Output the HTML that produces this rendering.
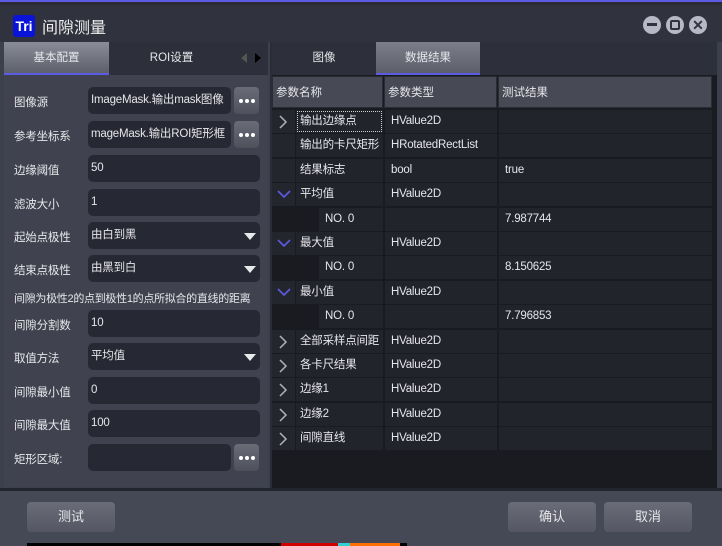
<!DOCTYPE html>
<html><head><meta charset="utf-8"><style>
*{margin:0;padding:0;box-sizing:border-box}
body{width:722px;height:546px;background:#3c3f4c;font-family:"Liberation Sans","Noto Sans CJK SC",sans-serif;font-size:11.5px;color:#e6e6ea;position:relative;overflow:hidden}
.abs{position:absolute}
.top{left:0;top:0;width:722px;height:5px;background:#2a2b34;border-top:2px solid #5b5be6}
.title{left:0;top:5px;width:722px;height:37px;background:#30323d}
.logo{left:13px;top:15px;width:22px;height:22px;background:#0a14d8;border-radius:3px;color:#fff;font-weight:bold;font-size:14px;line-height:22px;text-align:center}
.ttext{left:42px;top:14px;font-size:16px;color:#eee}
.wb{top:16px;width:18px;height:18px;border-radius:50%;background:#b6b8c6}
.lefttabs{left:4px;top:42px;width:230px;height:33px;background:#2d2f3a}
.tabA{left:4px;top:42px;width:105px;height:33px;background:linear-gradient(#8a8c98,#5d5f6b);border-bottom:2px solid #5b5be6;text-align:center;line-height:32px}
.tabB{left:109px;top:42px;width:125px;height:33px;text-align:center;line-height:33px;background:#2d2f3a}
.arrows{left:234px;top:42px;width:34px;height:33px;background:#2d2f3a}
.lp{left:4px;top:75px;width:264px;height:412px;background:#40434f}
.lab{left:14px;font-size:11.5px;white-space:nowrap;letter-spacing:-0.2px}
.inp{left:88px;width:172px;height:27px;background:#262833;border-radius:5px;padding-left:3px;line-height:27px;font-size:11.5px;white-space:nowrap;overflow:hidden;letter-spacing:-0.2px}
.inp.s{width:143px}
.dots{left:234px;width:25px;height:27px;border-radius:4px;background:linear-gradient(#6a6c78,#4e505c)}
.dots i{position:absolute;top:12px;width:4px;height:4px;border-radius:50%;background:#fff}
.tri{position:absolute;right:4px;top:11px;width:0;height:0;border-left:6px solid transparent;border-right:6px solid transparent;border-top:7px solid #e8e8ec}
.rp{left:270px;top:42px;width:447px;height:446px;background:#1a1b21;border-left:2px solid #2a2c36}
.rtabs{left:272px;top:42px;width:445px;height:33px;background:#2d2f3a}
.rt1{left:272px;top:42px;width:104px;height:33px;text-align:center;line-height:33px}
.rt2{left:376px;top:42px;width:104px;height:33px;background:linear-gradient(#7c7e8a,#5c5e6a);border-bottom:2px solid #5b5be6;text-align:center;line-height:32px}
.hd{top:76px;height:32px;background:#474955;line-height:32px;padding-left:3px;border:1px solid #2a2b33}
.cell{height:23px;background:#22242c;line-height:23px;padding-left:6px;white-space:nowrap;overflow:hidden;letter-spacing:-0.2px}
.bot{left:0;top:488px;width:722px;height:58px;background:#454855;border-top:3px solid #23252d}
.btn{top:502px;width:88px;height:30px;border-radius:4px;background:linear-gradient(#6a6c78,#545663);text-align:center;line-height:30px;font-size:13px}
</style></head><body>
<div class="abs top"></div>
<div class="abs title"></div>
<div class="abs logo">Tri</div>
<div class="abs ttext">间隙测量</div>
<div class="abs wb" style="left:643px"><div style="position:absolute;left:4px;top:7px;width:10px;height:3px;background:#30323d"></div></div>
<div class="abs wb" style="left:666px"><div style="position:absolute;left:4px;top:4px;width:10px;height:10px;border:2px solid #30323d;border-radius:2px"></div></div>
<div class="abs wb" style="left:689px;color:#30323d;font-weight:bold;font-size:14px;text-align:center;line-height:18px">✕</div>

<div class="abs lefttabs"></div>
<div class="abs tabA">基本配置</div>
<div class="abs tabB">ROI设置</div>
<div class="abs arrows"><div style="position:absolute;left:7px;top:11px;border-right:6px solid #555;border-top:5px solid transparent;border-bottom:5px solid transparent"></div><div style="position:absolute;left:21px;top:11px;border-left:6px solid #000;border-top:5px solid transparent;border-bottom:5px solid transparent"></div></div>
<div class="abs lp"></div>

<div class="abs lab" style="top:94px">图像源</div><div class="abs inp s" style="top:87px">ImageMask.输出mask图像</div><div class="abs dots" style="top:87px"><i style="left:5px"></i><i style="left:11px"></i><i style="left:17px"></i></div>
<div class="abs lab" style="top:128px">参考坐标系</div><div class="abs inp s" style="top:121px">mageMask.输出ROI矩形框</div><div class="abs dots" style="top:121px"><i style="left:5px"></i><i style="left:11px"></i><i style="left:17px"></i></div>
<div class="abs lab" style="top:162px">边缘阈值</div><div class="abs inp" style="top:155px">50</div>
<div class="abs lab" style="top:196px">滤波大小</div><div class="abs inp" style="top:189px">1</div>
<div class="abs lab" style="top:229px">起始点极性</div><div class="abs inp" style="top:222px">由白到黑<div class="tri"></div></div>
<div class="abs lab" style="top:262px">结束点极性</div><div class="abs inp" style="top:255px">由黑到白<div class="tri"></div></div>
<div class="abs lab" style="top:290px;font-size:11px;letter-spacing:-0.3px">间隙为极性2的点到极性1的点所拟合的直线的距离</div>
<div class="abs lab" style="top:317px">间隙分割数</div><div class="abs inp" style="top:310px">10</div>
<div class="abs lab" style="top:350px">取值方法</div><div class="abs inp" style="top:343px">平均值<div class="tri"></div></div>
<div class="abs lab" style="top:384px">间隙最小值</div><div class="abs inp" style="top:377px">0</div>
<div class="abs lab" style="top:417px">间隙最大值</div><div class="abs inp" style="top:410px">100</div>
<div class="abs lab" style="top:451px">矩形区域:</div><div class="abs inp s" style="top:444px"></div><div class="abs dots" style="top:444px"><i style="left:5px"></i><i style="left:11px"></i><i style="left:17px"></i></div>

<div class="abs rp"></div>
<div class="abs rtabs"></div>
<div class="abs rt1">图像</div>
<div class="abs rt2">数据结果</div>
<div class="abs hd" style="left:272px;width:111px">参数名称</div>
<div class="abs hd" style="left:384px;width:113px">参数类型</div>
<div class="abs hd" style="left:498px;width:214px">测试结果</div>

<div id="rows"></div>
<script>
var rows=[["r","输出边缘点","HValue2D",""],["","输出的卡尺矩形","HRotatedRectList",""],["","结果标志","bool","true"],["d","平均值","HValue2D",""],["c","NO. 0","","7.987744"],["d","最大值","HValue2D",""],["c","NO. 0","","8.150625"],["d","最小值","HValue2D",""],["c","NO. 0","","7.796853"],["r","全部采样点间距","HValue2D",""],["r","各卡尺结果","HValue2D",""],["r","边缘1","HValue2D",""],["r","边缘2","HValue2D",""],["r","间隙直线","HValue2D",""]];
var h="";
rows.forEach(function(r,i){var y=110+i*24.4;
 var a=r[0]=="r"?'<svg class="abs" style="left:278px;top:'+(y+5)+'px" width="10" height="14"><path d="M2 1 L8 7 L2 13" stroke="#b0b2bc" stroke-width="1.5" fill="none"/></svg>':r[0]=="d"?'<svg class="abs" style="left:277px;top:'+(y+7)+'px" width="14" height="9"><path d="M1 1 L7 7 L13 1" stroke="#5b5be6" stroke-width="1.6" fill="none"/></svg>':'';
 if(r[0]=="c"){h+='<div class="abs cell" style="left:272px;top:'+y+'px;width:23px;background:#1a1b21"></div><div class="abs cell" style="left:296px;top:'+y+'px;width:22px;background:#1a1b21"></div><div class="abs cell" style="left:319px;top:'+y+'px;width:64px">NO. 0</div>';}
 else h+='<div class="abs cell" style="left:272px;top:'+y+'px;width:23px;background:#24262e"></div><div class="abs cell" style="left:296px;top:'+y+'px;width:87px;padding-left:4px">'+r[1]+'</div>';
 h+=a+'<div class="abs cell" style="left:385px;top:'+y+'px;width:112px">'+r[2]+'</div><div class="abs cell" style="left:499px;top:'+y+'px;width:213px">'+r[3]+'</div>';
});
document.getElementById("rows").innerHTML=h;
</script>
<div class="abs" style="left:297px;top:111px;width:85px;height:21px;border:1px dotted #ccc"></div>

<div class="abs bot"></div>
<div class="abs btn" style="left:27px">测试</div>
<div class="abs btn" style="left:508px">确认</div>
<div class="abs btn" style="left:604px">取消</div>
<div class="abs" style="left:27px;top:543px;width:380px;height:3px;background:#000"></div>
<div class="abs" style="left:281px;top:543px;width:57px;height:3px;background:#d00000"></div>
<div class="abs" style="left:338px;top:543px;width:12px;height:3px;background:#30d0d0"></div>
<div class="abs" style="left:350px;top:543px;width:50px;height:3px;background:#ff7000"></div>
</body></html>
